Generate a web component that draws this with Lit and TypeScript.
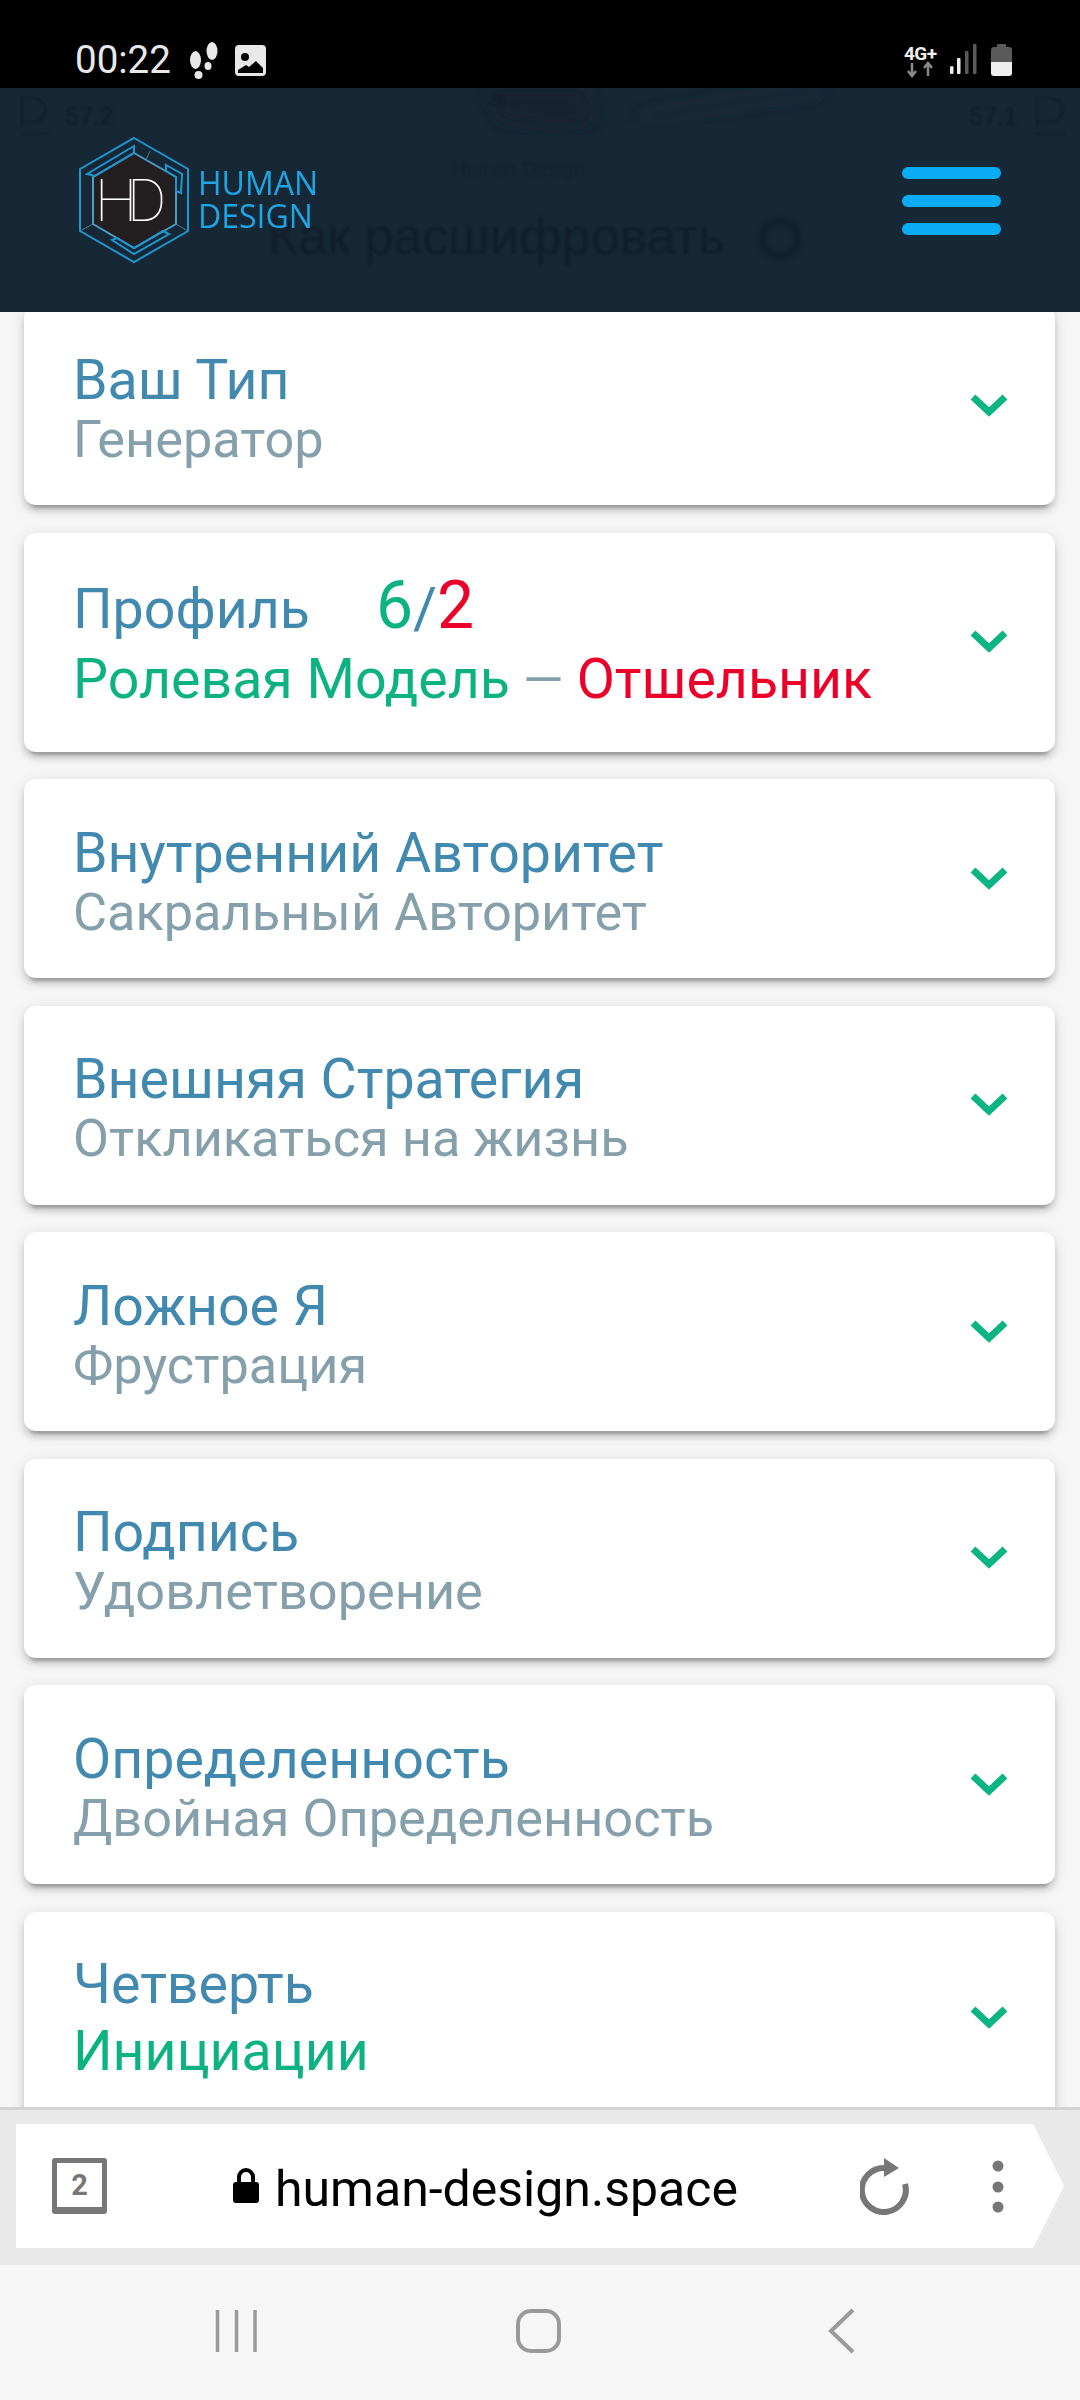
import { LitElement, html, css, svg } from "lit";
import { customElement } from "lit/decorators.js";

const chevron = html`<svg class="chev" viewBox="0 0 40 26"><path d="M4 4 L20 19 L36 4" fill="none" stroke="currentColor" stroke-width="7"/></svg>`;

const plain = [
  ["Внутренний Авторитет", "Сакральный Авторитет"],
  ["Внешняя Стратегия", "Откликаться на жизнь"],
  ["Ложное Я", "Фрустрация"],
  ["Подпись", "Удовлетворение"],
  ["Определенность", "Двойная Определенность"],
];

const logo = svg`
  <polygon points="134,138 188,169 188,231 134,262 80,231 80,169" fill="none" stroke="#1d97d2" stroke-width="2"/>
  <polygon points="134,153 176,177 176,224 134,248 93,224 93,177" fill="#231f20" stroke="#4a9dc4" stroke-width="2"/>
  <path d="M134 146 L87 174 L95 176 L134 153 Z" fill="none" stroke="#1d97d2" stroke-width="2"/>
  <path d="M166 165 L182 174 L181 193 L176 191 L176 177 L166 171 Z" fill="none" stroke="#1d97d2" stroke-width="2"/>
  <path d="M112 240 L134 254 L169 234 L163 231 L134 248 L117 238 Z" fill="none" stroke="#1d97d2" stroke-width="2"/>
  <path d="M150 151 L146 160 M80 231 L93 224 M188 231 L176 224" fill="none" stroke="#4a7d96" stroke-width="1"/>
  <text class="hd" x="95" y="221">H</text>
  <text class="hd" x="127" y="221">D</text>
  <text class="lg" x="198" y="195">HUMAN</text>
  <text class="lg" x="198" y="228">DESIGN</text>
`;

@customElement("app-root")
export class AppRoot extends LitElement {
  static styles = css`
    :host { display: flex; flex-direction: column; width: 1080px; height: 2400px; overflow: hidden; background: #f6f6f6; font-family: Roboto, sans-serif; }
    .status { height: 88px; flex: none; background: #000; display: flex; align-items: flex-start; position: relative; z-index: 3; padding: 0 0 0 75px; box-sizing: border-box; }
    .time { color: #e8e8e8; font-size: 38.500px; line-height: 52px; margin-top: 34px; }
    .st-left { margin: 39px 0 0 17px; }
    .st-right { margin: 32px 46px 0 auto; }
    .status svg { display: block; flex: none; }
    .header { height: 224px; flex: none; background: #162735; position: relative; z-index: 2; overflow: hidden; }
    .header svg { position: absolute; left: 0; top: 0; }
    .hd { font: 100 60px Roboto, sans-serif; fill: #fff; }
    .lg { font: 400 32px "Open Sans", sans-serif; fill: #1ea5e3; }
    .ghost { fill: #111f2b; font-family: "Liberation Sans", sans-serif; }
    .soft { filter: blur(1px); }
    .softer { filter: blur(2px); }
    .burger { position: absolute; left: 902px; top: 79px; width: 99px; display: flex; flex-direction: column; gap: 16px; }
    .burger i { display: block; height: 12px; border-radius: 6px; background: #0aadf5; }
    .list { flex: 1; min-height: 0; overflow: hidden; display: flex; flex-direction: column; gap: 27.500px; padding: 0 25px 0 24px; margin-top: -6px; }
    .card { flex: none; height: 199px; background: #fff; border-radius: 12px; display: flex; align-items: center; padding: 0 46px 0 49px; box-sizing: border-box;
      box-shadow: 0 9px 3px -6px rgba(0,0,0,.2), 0 6px 6px 0 rgba(0,0,0,.14), 0 3px 15px 0 rgba(0,0,0,.12); }
    .card.tall { height: 219px; }
    .card.last { height: 213px; }
    .body { flex: 1; min-width: 0; padding-top: 9px; }
    .t { font-size: 55.500px; line-height: 57px; color: #4289b0; white-space: nowrap; }
    .s { font-size: 52.300px; line-height: 60px; color: #85a0ab; white-space: nowrap; }
    .tall .body { padding-top: 0; margin-top: 1px; }
    .tall .t { line-height: 70px; height: 74px; }
    .tall .s { font-size: 55.500px; line-height: 70px; }
    .last .body { padding-top: 0; margin-top: 0; }
    .last .t { height: 67px; }
    .g { color: #0db283; }
    .r { color: #ec0029; }
    .num { font-size: 66px; }
    .gap { margin-left: 66px; }
    .slash { color: #4289b0; font-size: 58px; }
    .tall .s .dash { color: #85a0ab; font-size: 52.300px; }
    .chev { display: block; width: 40px; height: 26px; color: #0db483; flex: none; }
    .urlbar { height: 155px; flex: none; background: #e9e9e9; border-top: 3px solid #d2d2d2; position: relative; z-index: 2; }
    .url { position: absolute; left: 16px; top: 14px; width: 1048px; height: 124px; background: #fff; clip-path: polygon(0 0, 1017px 0, 100% 50%, 1017px 100%, 0 100%); display: flex; align-items: center; }
    .tab { width: 55px; height: 56px; margin-left: 36px; box-sizing: border-box; border: 5px solid #777; border-bottom-width: 7px; border-radius: 3px; color: #777; font-size: 29px; font-weight: 700; display: flex; align-items: center; justify-content: center; flex: none; }
    .lock { margin-left: 126px; flex: none; display: block; }
    .addr { font-size: 50px; color: #000; margin: 6px 0 0 16px; white-space: nowrap; line-height: 60px; }
    .rel { position: absolute; left: 844px; top: 24px; }
    .dots { position: absolute; left: 960px; top: 33px; }
    .nav { height: 135px; flex: none; background: #f6f6f6; position: relative; z-index: 2; }
    .nav svg { position: absolute; left: 0; top: 0; }
  `;

  render() {
    return html`
      <div class="status">
        <span class="time">00:22</span>
        <svg class="st-left" width="80" height="44" viewBox="0 0 80 44">
          <g fill="#e8e8e8">
            <ellipse cx="7.500" cy="21" rx="5.500" ry="9"/><ellipse cx="10.500" cy="36" rx="4" ry="4"/>
            <ellipse cx="24" cy="12" rx="5.500" ry="9"/><ellipse cx="20" cy="27" rx="3.500" ry="4"/>
            <path fill-rule="evenodd" d="M51 6h23a4 4 0 0 1 4 4v23a4 4 0 0 1-4 4H51a4 4 0 0 1-4-4V10a4 4 0 0 1 4-4Zm6 8a4 4 0 1 0 0 8 4 4 0 0 0 0-8Zm-7 20h25v-5l-7-7-7 6-3-2-8 5Z"/>
          </g>
        </svg>
        <svg class="st-right" width="130" height="50" viewBox="0 0 130 50">
          <text x="0" y="28" style="font:700 19px Roboto,sans-serif" fill="#eee" textLength="33">4G+</text>
          <path d="M8 31v13m-4-5 4 5 4-5" fill="none" stroke="#8a8a8a" stroke-width="2.500"/>
          <path d="M24 44V31m-4 5 4-5 4 5" fill="none" stroke="#8a8a8a" stroke-width="2.500"/>
          <rect x="46" y="34" width="3.500" height="8" rx="1.500" fill="#eee"/>
          <rect x="53" y="26" width="3.500" height="16" rx="1" fill="#eee"/>
          <rect x="61" y="19" width="3.500" height="23" rx="1" fill="#5a5a5a"/>
          <rect x="69" y="12" width="3.500" height="30" rx="1" fill="#5a5a5a"/>
          <path d="M93 15v-2a1 1 0 0 1 1-1h7a1 1 0 0 1 1 1v2h3a3 3 0 0 1 3 3v12H87V18a3 3 0 0 1 3-3Z" fill="#5a5a5a"/>
          <path d="M87 30h21v11a3 3 0 0 1-3 3H90a3 3 0 0 1-3-3Z" fill="#eee"/>
        </svg>
      </div>
      <div class="header">
        <svg width="1080" height="224" viewBox="0 88 1080 224">
          <defs><filter id="b"><feGaussianBlur stdDeviation="8"/></filter></defs>
          <path d="M485 88 L585 88 L595 120 L560 130 L500 120 Z" fill="#152431" filter="url(#b)"/>
          <path d="M640 120 Q760 96 820 90" fill="none" stroke="#1a2c3b" stroke-width="8" filter="url(#b)"/>
          <g class="ghost soft">
            <text x="65" y="125" font-size="25">57.2</text>
            <text x="969" y="125" font-size="25">57.1</text>
            <text x="488" y="106" font-size="16">26</text>
            <text x="452" y="176" font-size="20" opacity=".5">Human Design</text>
            <text x="268" y="254" font-size="52">Как расшифровать</text>
          </g>
          <path class="soft" d="M22 134h26M22 128V98h10c18 0 18 24 0 24H22M1037 134h28M1037 128V98h12c18 0 18 24 0 24h-12" fill="none" stroke="#111f2b" stroke-width="2"/>
          <circle class="softer" cx="780" cy="239" r="18" fill="none" stroke="#121f2b" stroke-width="6"/>
          ${logo}
        </svg>
        <div class="burger"><i></i><i></i><i></i></div>
      </div>
      <div class="list">
        <div class="card">
          <div class="body"><div class="t">Ваш Тип</div><div class="s">Генератор</div></div>${chevron}
        </div>
        <div class="card tall">
          <div class="body">
            <div class="t">Профиль<span class="num g gap">6</span><span class="slash">/</span><span class="num r">2</span></div>
            <div class="s"><span class="g">Ролевая Модель</span><span class="dash"> — </span><span class="r">Отшельник</span></div>
          </div>${chevron}
        </div>
        ${plain.map(([a, b]) => html`<div class="card"><div class="body"><div class="t">${a}</div><div class="s">${b}</div></div>${chevron}</div>`)}
        <div class="card tall last">
          <div class="body"><div class="t">Четверть</div><div class="s g">Инициации</div></div>${chevron}
        </div>
      </div>
      <div class="urlbar">
        <div class="url">
          <div class="tab">2</div>
          <svg class="lock" width="26" height="36" viewBox="0 0 26 36"><path d="M6 15V9a7 7 0 0 1 14 0v6" fill="none" stroke="#000" stroke-width="4"/><rect x="0" y="14" width="26" height="21" rx="3" fill="#000"/></svg>
          <span class="addr">human-design.space</span>
          <svg class="rel" width="50" height="70" viewBox="0 0 50 70"><path d="M25 20A22 22 0 1 0 45 36" fill="none" stroke="#777" stroke-width="6"/><path d="M24 10L39 20L24 29Z" fill="#777"/></svg>
          <svg class="dots" width="44" height="64" viewBox="0 0 44 64"><g fill="#777"><circle cx="22" cy="9" r="5.500"/><circle cx="22" cy="30" r="5.500"/><circle cx="22" cy="50" r="5.500"/></g></svg>
        </div>
      </div>
      <div class="nav">
        <svg width="1080" height="135" viewBox="0 2265 1080 135">
          <path d="M217.500 2310v42M236.500 2310v42M255 2310v42" stroke="#9a9a9a" stroke-width="3.500" fill="none"/>
          <rect x="518" y="2311" width="41" height="40" rx="13" fill="none" stroke="#9a9a9a" stroke-width="4"/>
          <path d="M853 2310 L831 2331 L853 2352" fill="none" stroke="#9a9a9a" stroke-width="4"/>
        </svg>
      </div>
    `;
  }
}
